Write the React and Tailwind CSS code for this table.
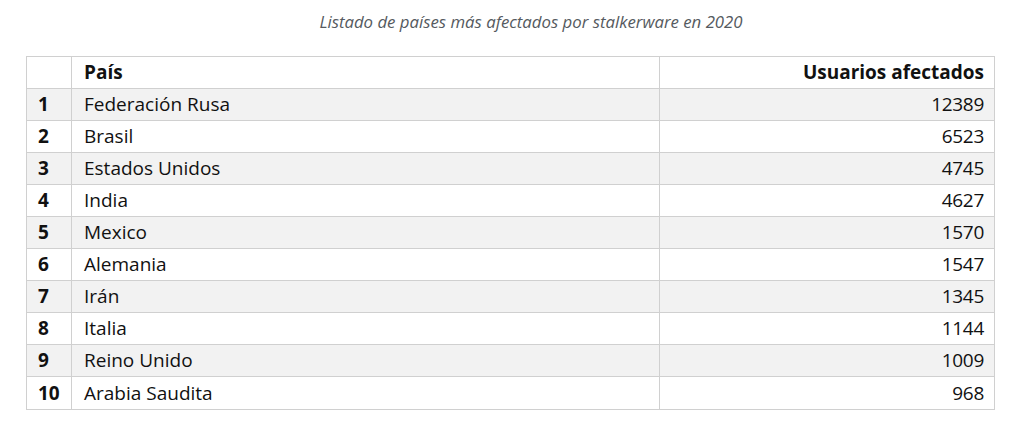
import React from "react";

const rows = [
  ["1", "Federación Rusa", "12389"],
  ["2", "Brasil", "6523"],
  ["3", "Estados Unidos", "4745"],
  ["4", "India", "4627"],
  ["5", "Mexico", "1570"],
  ["6", "Alemania", "1547"],
  ["7", "Irán", "1345"],
  ["8", "Italia", "1144"],
  ["9", "Reino Unido", "1009"],
  ["10", "Arabia Saudita", "968"],
];

export default function App() {
  return (
    <div
      className="w-[1024px] h-[437px] bg-white text-[#111111]"
      style={{ fontFamily: '"Open Sans", "Liberation Sans", sans-serif' }}
    >
      <div className="h-[56px] pt-[11px] pl-[38px] flex justify-center">
        <p className="italic text-[16.8px] leading-[22px] text-[#555a60]">
          Listado de países más afectados por stalkerware en 2020
        </p>
      </div>
      <div className="ml-[26px] w-[969px] border border-[#d0d0d0] text-[19px]">
        <div className="flex h-[32px] border-b border-[#d0d0d0] bg-white font-bold">
          <div className="w-[45px] border-r border-[#d0d0d0]"></div>
          <div className="w-[588px] border-r border-[#d0d0d0] pl-[12px] flex items-center">País</div>
          <div className="flex-1 pr-[10px] flex items-center justify-end">Usuarios afectados</div>
        </div>
        {rows.map((r, i) => (
          <div
            key={r[0]}
            className={
              "flex h-[32px] " +
              (i < rows.length - 1 ? "border-b border-[#d0d0d0] " : "h-[31px] ") +
              (i % 2 === 0 ? "bg-[#f2f2f2]" : "bg-white")
            }
          >
            <div className="w-[45px] border-r border-[#d0d0d0] pl-[11px] flex items-center font-bold">{r[0]}</div>
            <div className="w-[588px] border-r border-[#d0d0d0] pl-[12px] flex items-center">{r[1]}</div>
            <div className="flex-1 pr-[10px] flex items-center justify-end tracking-[-0.3px]">{r[2]}</div>
          </div>
        ))}
      </div>
    </div>
  );
}
